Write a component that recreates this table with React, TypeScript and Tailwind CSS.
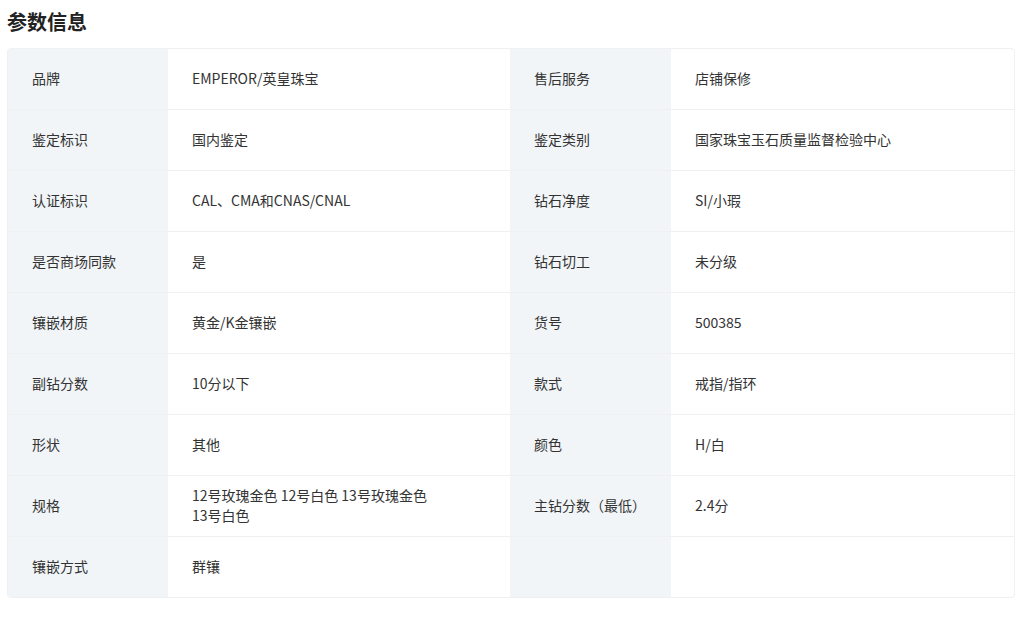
import React from "react";

const rows: [string, string, string, string][] = [
  ["品牌", "EMPEROR/英皇珠宝", "售后服务", "店铺保修"],
  ["鉴定标识", "国内鉴定", "鉴定类别", "国家珠宝玉石质量监督检验中心"],
  ["认证标识", "CAL、CMA和CNAS/CNAL", "钻石净度", "SI/小瑕"],
  ["是否商场同款", "是", "钻石切工", "未分级"],
  ["镶嵌材质", "黄金/K金镶嵌", "货号", "500385"],
  ["副钻分数", "10分以下", "款式", "戒指/指环"],
  ["形状", "其他", "颜色", "H/白"],
  ["规格", "12号玫瑰金色 12号白色 13号玫瑰金色 13号白色", "主钻分数（最低）", "2.4分"],
  ["镶嵌方式", "群镶", "", ""],
];

export default function App() {
  return (
    <div
      className="w-[1031px] h-[623px] bg-white px-[7px] pt-[8px]"
      style={{ fontFamily: '"Noto Sans CJK SC", "Noto Sans", sans-serif' }}
    >
      <h2 className="text-[20px] leading-[28px] font-bold text-[#222] mb-[12px]">参数信息</h2>
      <div className="w-[1008px] border border-[#eef0f2] rounded-[4px] overflow-hidden">
        {rows.map((r, i) => (
          <div
            key={i}
            className={`grid grid-cols-[160px_342px_161px_1fr] text-[14px] leading-[20px] text-[#333] break-keep ${
              i < rows.length - 1 ? "border-b border-[#eef0f2]" : ""
            }`}
          >
            <div className="bg-[#f2f5f8] h-[60px] flex items-center px-[24px] pb-[3px]">{r[0]}</div>
            <div className="h-[60px] flex items-center pl-[24px] pr-[40px] pb-[3px]">{r[1]}</div>
            <div className="bg-[#f2f5f8] h-[60px] flex items-center px-[24px] pb-[3px]">{r[2]}</div>
            <div className="h-[60px] flex items-center px-[24px] pb-[3px]">{r[3]}</div>
          </div>
        ))}
      </div>
    </div>
  );
}
